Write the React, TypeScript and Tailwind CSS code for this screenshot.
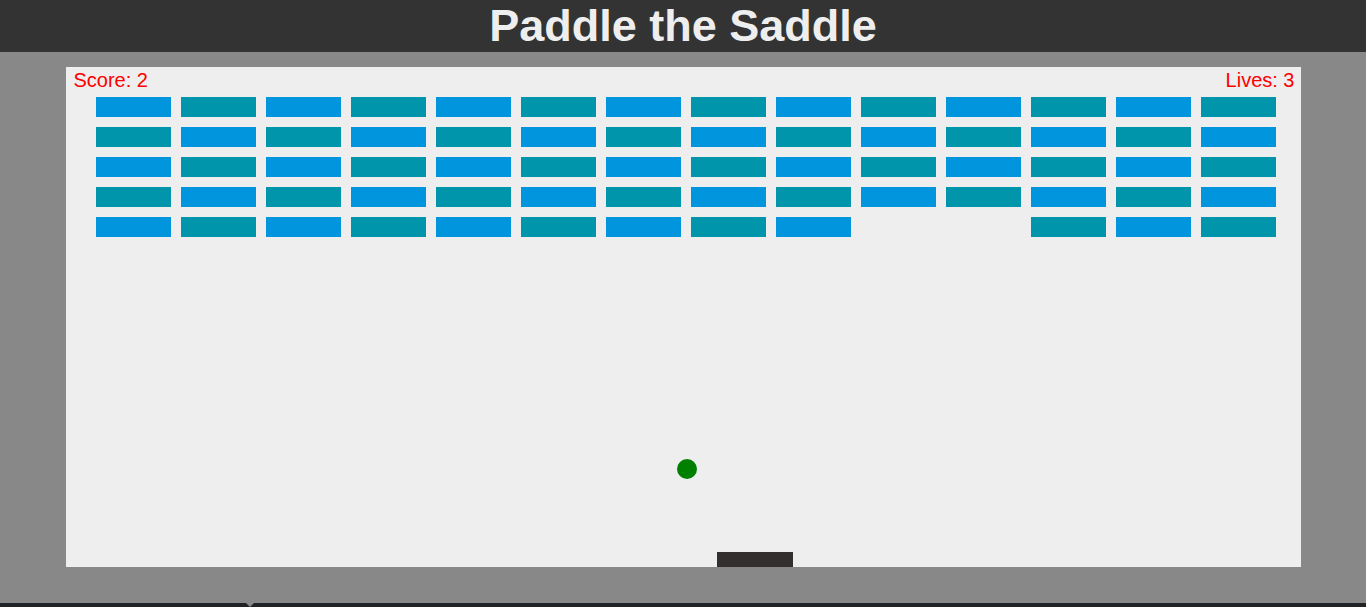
import React from 'react';

const ROWS = 5;
const COLS = 14;
// bricks already knocked out: [row, col]
const broken = new Set(['4-9', '4-10']);

function Brick({ row, col }: { row: number; col: number }) {
  if (broken.has(`${row}-${col}`)) return <div className="h-[20px] w-[75px]" />;
  const blue = (row + col) % 2 === 0;
  return <div className={blue ? 'h-[20px] w-[75px] bg-[#0095dd]' : 'h-[20px] w-[75px] bg-[#0095aa]'} />;
}

export default function App() {
  const cells = [];
  for (let r = 0; r < ROWS; r++) {
    for (let c = 0; c < COLS; c++) {
      cells.push(<Brick key={`${r}-${c}`} row={r} col={c} />);
    }
  }

  return (
    <div className="flex min-h-[607px] flex-col bg-[#1f2325]" style={{ fontFamily: '"Liberation Sans", Arial, sans-serif' }}>
      {/* Header */}
      <header className="flex h-[52px] items-center justify-center bg-[#333333]">
        <h1 className="text-[45px] font-bold leading-[52px] text-[#eeeeee]">Paddle the Saddle</h1>
      </header>

      {/* Game area */}
      <main className="relative flex justify-center bg-[#888888] pt-[15px] pb-[36px]">
        <div className="relative h-[500px] w-[1235px] overflow-hidden bg-[#eeeeee]">
          {/* HUD */}
          <div className="flex justify-between pl-[8px] pr-[6px] pt-[3px] text-[20px] leading-[20px] text-[#ff0000]">
            <span>Score: 2</span>
            <span>Lives: 3</span>
          </div>

          <div className="grid grid-cols-[repeat(14,75px)] gap-[10px] pl-[30px] pt-[7px]">{cells}</div>

          {/* ball */}
          <div className="absolute left-[611px] top-[392px] h-[20px] w-[20px] rounded-full bg-[#008000]" />
          {/* paddle */}
          <div className="absolute left-[651px] top-[485px] h-[15px] w-[76px] bg-[#332f2f]" />
        </div>
        <div className="absolute bottom-[-4px] left-[246px] h-0 w-0 border-x-[4px] border-t-[4px] border-x-transparent border-t-[#888888]" />
      </main>
      <div className="flex-1" />
    </div>
  );
}
